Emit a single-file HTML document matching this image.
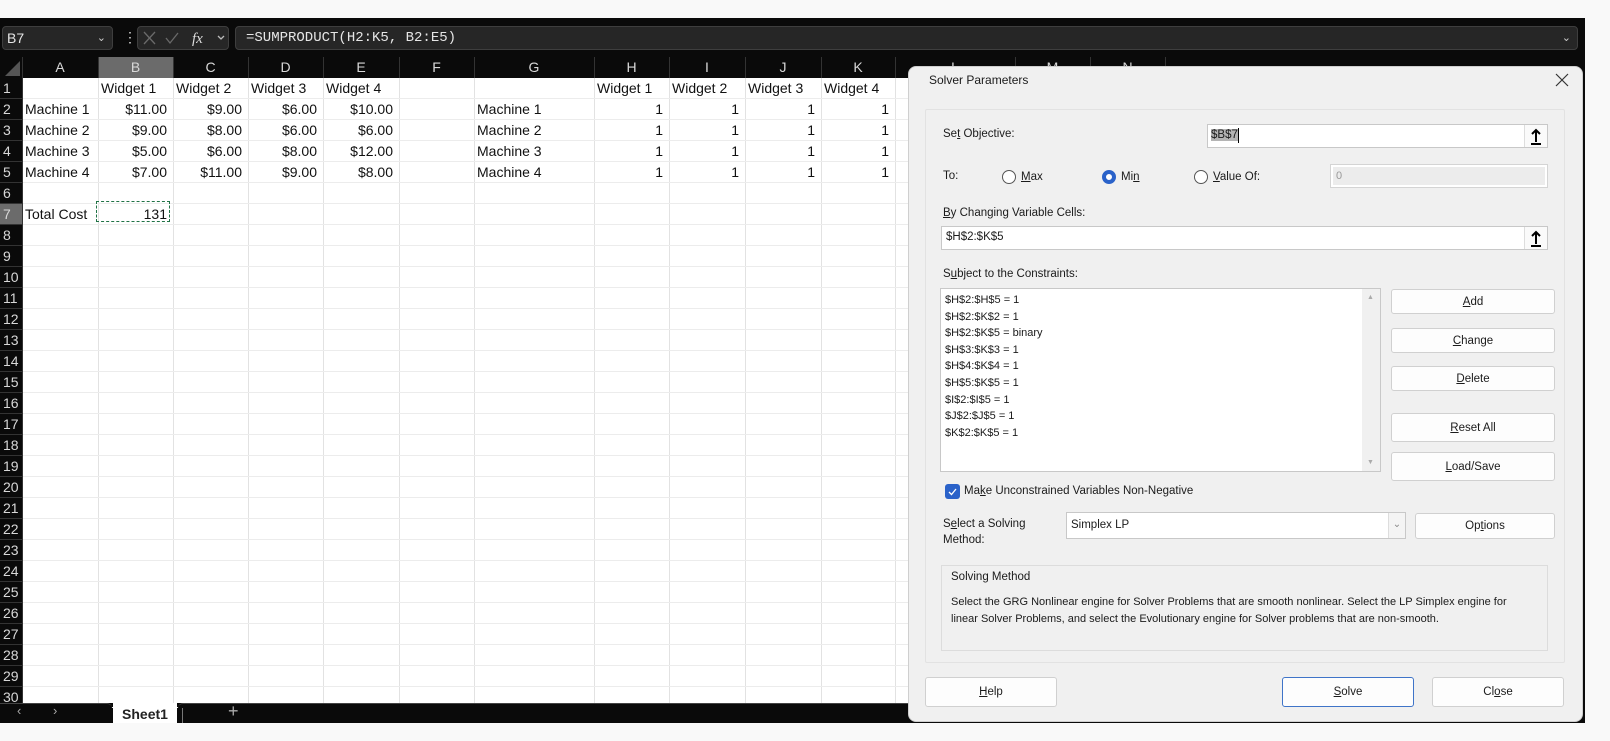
<!DOCTYPE html>
<html><head><meta charset="utf-8"><style>
*{margin:0;padding:0;box-sizing:border-box}
body{width:1610px;height:741px;background:#f9f9f9;position:relative;overflow:hidden;font-family:"Liberation Sans",sans-serif}
.a{position:absolute}
#dark{left:0;top:18px;width:1585px;height:705px;background:#0a0a0a}
.fb{background:#262626;border:1px solid #3e3e3e;border-radius:4px;color:#e6e6e6}
.ch{color:#d8d8d8;font-size:14px;text-align:center;top:57px;height:21px;line-height:21px}
.rh{color:#d8d8d8;font-size:14px;left:0;width:22px;height:21px;line-height:21px;padding-left:3px}
.c{font-size:14px;color:#111;height:21px;line-height:21px;white-space:nowrap}
.r{text-align:right}
#dlg{left:908px;top:66px;width:675px;height:656px;background:#f0f0f0;border-radius:8px;border:1px solid #cfcfcf}
.d{font-size:11.5px;color:#1b1b1b;white-space:nowrap}
.btn{background:#fdfdfd;border:1px solid #d0d0d0;border-radius:3px;font-size:11.5px;color:#1b1b1b;text-align:center}
.inp{background:#fff;border:1px solid #c8c8c8}
.rad{width:14px;height:14px;border-radius:50%;border:1px solid #555;background:#fff}
u{text-decoration:underline}
</style></head><body>
<div id="dark" class="a"></div>
<div class="a fb" style="left:2px;top:26px;width:111px;height:24px;font-size:14px;line-height:22px;padding-left:4px">B7<span style="position:absolute;right:6px;top:0;font-size:11px;color:#ccc">&#8964;</span></div>
<div class="a" style="left:123px;top:27px;color:#ddd;font-size:14px;line-height:20px">&#8942;</div>
<div class="a fb" style="left:137px;top:26px;width:92px;height:24px"></div>
<svg class="a" style="left:137px;top:26px" width="92" height="24"><g stroke="#6a6a6a" stroke-width="1.3" fill="none"><path d="M7 6l11 12M18 6L7 18"/><path d="M29 12l4 5l8-10"/><path d="M81 10l3 3l3-3" stroke="#bbb"/></g><text x="55" y="17" font-family="Liberation Serif" font-style="italic" font-size="15" fill="#ddd">fx</text></svg>
<div class="a fb" style="left:235px;top:26px;width:1343px;height:24px;font-family:'Liberation Mono',monospace;font-size:14px;line-height:22px;padding-left:10px">=SUMPRODUCT(H2:K5, B2:E5)<span style="position:absolute;right:6px;top:0;font-family:'Liberation Sans';font-size:11px;color:#ccc">&#8964;</span></div>
<svg class="a" style="left:0;top:57px" width="22" height="21"><path d="M20 4V19H5Z" fill="#555"/></svg>
<div class="a" style="left:22px;top:78px;width:886px;height:625px;background:#fff"></div>
<div class="a" style="left:98px;top:57px;width:75px;height:21px;background:#6b6b6b"></div>
<div class="a" style="left:0;top:204px;width:22px;height:21px;background:#6b6b6b"></div>
<div id="grid"></div>
<div id="cells"></div>
<div class="a" style="left:96px;top:201px;width:74px;height:21px;border:1.5px dashed #217346"></div>
<div class="a" style="left:0;top:703px;width:112px;height:20px;background:#0a0a0a;border-radius:0 5px 0 0;border-top:1px solid #444;color:#aaa;font-size:13px"><span style="position:absolute;left:17px;top:-1px">&lsaquo;</span><span style="position:absolute;left:53px;top:-1px">&rsaquo;</span></div>
<div class="a" style="left:113px;top:703px;width:64px;height:20px;background:#fff;font-size:14px;font-weight:bold;color:#222;text-align:center;line-height:22px">Sheet1</div>
<div class="a" style="left:178px;top:703px;width:730px;height:20px;background:#0a0a0a;border-radius:5px 0 0 0;border-top:1px solid #444"></div>
<div class="a" style="left:182px;top:708px;width:1px;height:15px;background:#777"></div>
<div class="a" style="left:228px;top:701px;color:#aaa;font-size:18px">+</div>

<div id="dlg" class="a"></div>
<div class="a d" style="left:929px;top:73px;font-size:12px">Solver Parameters</div>
<svg class="a" style="left:1555px;top:73px" width="14" height="14"><path d="M1 1L13 13M13 1L1 13" stroke="#333" stroke-width="1.2"/></svg>
<div class="a" style="left:925px;top:109px;width:640px;height:554px;border:1px solid #e2e2e2;border-radius:2px"></div>
<div class="a d" style="left:943px;top:128px">Se<u>t</u> Objective:</div>
<div class="a inp" style="left:1207px;top:124px;width:341px;height:24px"></div>
<div class="a d" style="left:1211px;top:129px;background:#b4b4b4">$B$7</div>
<div class="a" style="left:1238px;top:128px;width:1px;height:15px;background:#000"></div>
<div class="a d" style="left:943px;top:170px">To:</div>
<div class="a rad" style="left:1002px;top:170px"></div><div class="a d" style="left:1021px;top:171px"><u>M</u>ax</div>
<div class="a rad" style="left:1102px;top:170px;border:4px solid #2a62c9"></div><div class="a d" style="left:1121px;top:171px">Mi<u>n</u></div>
<div class="a rad" style="left:1194px;top:170px"></div><div class="a d" style="left:1213px;top:171px"><u>V</u>alue Of:</div>
<div class="a" style="left:1330px;top:164px;width:218px;height:24px;background:#fff;border:1px solid #d4d4d4"><div style="margin:2px;height:18px;background:#ececec;font-size:11px;color:#999;padding-left:3px;line-height:18px">0</div></div>
<div class="a d" style="left:943px;top:207px"><u>B</u>y Changing Variable Cells:</div>
<div class="a inp" style="left:941px;top:226px;width:607px;height:24px"></div>
<div class="a d" style="left:946px;top:231px">$H$2:$K$5</div>
<div class="a" style="left:1524px;top:125px;width:23px;height:22px;background:#fafafa;border-left:1px solid #ddd"></div>
<div class="a" style="left:1524px;top:227px;width:23px;height:22px;background:#fafafa;border-left:1px solid #ddd"></div>
<svg class="a" style="left:1529px;top:128px" width="14" height="18"><path d="M7 2V14M3 6L7 2L11 6M2 16H12" stroke="#000" stroke-width="2" fill="none"/></svg>
<svg class="a" style="left:1529px;top:230px" width="14" height="18"><path d="M7 2V14M3 6L7 2L11 6M2 16H12" stroke="#000" stroke-width="2" fill="none"/></svg>
<div class="a d" style="left:943px;top:268px">S<u>u</u>bject to the Constraints:</div>
<div class="a" style="left:940px;top:288px;width:441px;height:184px;background:#fff;border:1px solid #c8c8c8"></div>
<div class="a" style="left:1362px;top:289px;width:18px;height:182px;background:#f0f0f0"></div>
<div class="a" style="left:1367px;top:294px;font-size:7px;color:#aaa">&#9650;</div>
<div class="a" style="left:1367px;top:459px;font-size:7px;color:#aaa">&#9660;</div>
<div class="a d" style="left:945px;top:292px;line-height:16.6px;font-size:11px">$H$2:$H$5 = 1<br>$H$2:$K$2 = 1<br>$H$2:$K$5 = binary<br>$H$3:$K$3 = 1<br>$H$4:$K$4 = 1<br>$H$5:$K$5 = 1<br>$I$2:$I$5 = 1<br>$J$2:$J$5 = 1<br>$K$2:$K$5 = 1</div>
<div class="a btn" style="left:1391px;top:289px;width:164px;height:25px;line-height:24px"><u>A</u>dd</div>
<div class="a btn" style="left:1391px;top:328px;width:164px;height:25px;line-height:24px"><u>C</u>hange</div>
<div class="a btn" style="left:1391px;top:366px;width:164px;height:25px;line-height:24px"><u>D</u>elete</div>
<div class="a btn" style="left:1391px;top:413px;width:164px;height:29px;line-height:28px"><u>R</u>eset All</div>
<div class="a btn" style="left:1391px;top:452px;width:164px;height:29px;line-height:28px"><u>L</u>oad/Save</div>
<div class="a" style="left:945px;top:484px;width:15px;height:15px;background:#2a62c9;border-radius:3px"></div>
<svg class="a" style="left:945px;top:484px" width="15" height="15"><path d="M4 8l2.5 2.5L11 5" stroke="#fff" stroke-width="1.3" fill="none"/></svg>
<div class="a d" style="left:964px;top:485px">Ma<u>k</u>e Unconstrained Variables Non-Negative</div>
<div class="a d" style="left:943px;top:516px;line-height:16px">S<u>e</u>lect a Solving<br>Method:</div>
<div class="a inp" style="left:1066px;top:512px;width:340px;height:27px"></div>
<div class="a d" style="left:1071px;top:519px">Simplex LP</div>
<div class="a" style="left:1388px;top:513px;width:17px;height:25px;background:#f4f4f4;border-left:1px solid #ddd;font-size:10px;color:#888;text-align:center;line-height:24px">&#8964;</div>
<div class="a btn" style="left:1415px;top:513px;width:140px;height:26px;line-height:25px">Op<u>t</u>ions</div>
<div class="a" style="left:941px;top:565px;width:607px;height:86px;border:1px solid #dcdcdc"></div>
<div class="a d" style="left:951px;top:571px">Solving Method</div>
<div class="a d" style="left:951px;top:594px;line-height:17px;font-size:11px">Select the GRG Nonlinear engine for Solver Problems that are smooth nonlinear. Select the LP Simplex engine for<br>linear Solver Problems, and select the Evolutionary engine for Solver problems that are non-smooth.</div>
<div class="a btn" style="left:925px;top:677px;width:132px;height:30px;line-height:29px"><u>H</u>elp</div>
<div class="a btn" style="left:1282px;top:677px;width:132px;height:30px;line-height:28px;border:1px solid #3f74c8"><u>S</u>olve</div>
<div class="a btn" style="left:1432px;top:677px;width:132px;height:30px;line-height:29px">Cl<u>o</u>se</div>

<script>
var cols=[["A",22,98],["B",98,173],["C",173,248],["D",248,323],["E",323,399],["F",399,474],["G",474,594],["H",594,669],["I",669,745],["J",745,821],["K",821,895],["L",895,1015],["M",1015,1090],["N",1090,1165]];
var h="";
cols.forEach(function(c){
 h+='<div class="a" style="left:'+c[2]+'px;top:57px;width:1px;height:21px;background:#333"></div>';
 h+='<div class="a" style="left:'+c[2]+'px;top:78px;width:1px;height:625px;background:#e2e2e2"></div>';
 h+='<div class="a ch" style="left:'+c[1]+'px;width:'+(c[2]-c[1])+'px">'+c[0]+'</div>';
});
for(var i=1;i<=30;i++){
 var t=78+(i-1)*21;
 h+='<div class="a" style="left:22px;top:'+(t+20)+'px;width:886px;height:1px;background:#ececec"></div>';
 h+='<div class="a" style="left:0;top:'+(t+20)+'px;width:22px;height:1px;background:#333"></div>';
 h+='<div class="a rh" style="top:'+t+'px">'+i+'</div>';
}
h+='<div class="a" style="left:22px;top:57px;width:1px;height:646px;background:#333"></div>';
document.getElementById("grid").innerHTML=h;
var d=[["","Widget 1","Widget 2","Widget 3","Widget 4","","","Widget 1","Widget 2","Widget 3","Widget 4"],
["Machine 1","$11.00","$9.00","$6.00","$10.00","","Machine 1","1","1","1","1"],
["Machine 2","$9.00","$8.00","$6.00","$6.00","","Machine 2","1","1","1","1"],
["Machine 3","$5.00","$6.00","$8.00","$12.00","","Machine 3","1","1","1","1"],
["Machine 4","$7.00","$11.00","$9.00","$8.00","","Machine 4","1","1","1","1"],
[],["Total Cost","131"]];
var s="";
d.forEach(function(row,r){row.forEach(function(v,ci){if(!v)return;var c=cols[ci];var t=78+r*21;
 var right=(r>0&&ci>0&&ci!=6);
 if(right)s+='<div class="a c r" style="left:'+c[1]+'px;width:'+(c[2]-c[1]-6)+'px;top:'+t+'px">'+v+'</div>';
 else s+='<div class="a c" style="left:'+(c[1]+3)+'px;top:'+t+'px">'+v+'</div>';});});
document.getElementById("cells").innerHTML=s;
</script>
</body></html>
